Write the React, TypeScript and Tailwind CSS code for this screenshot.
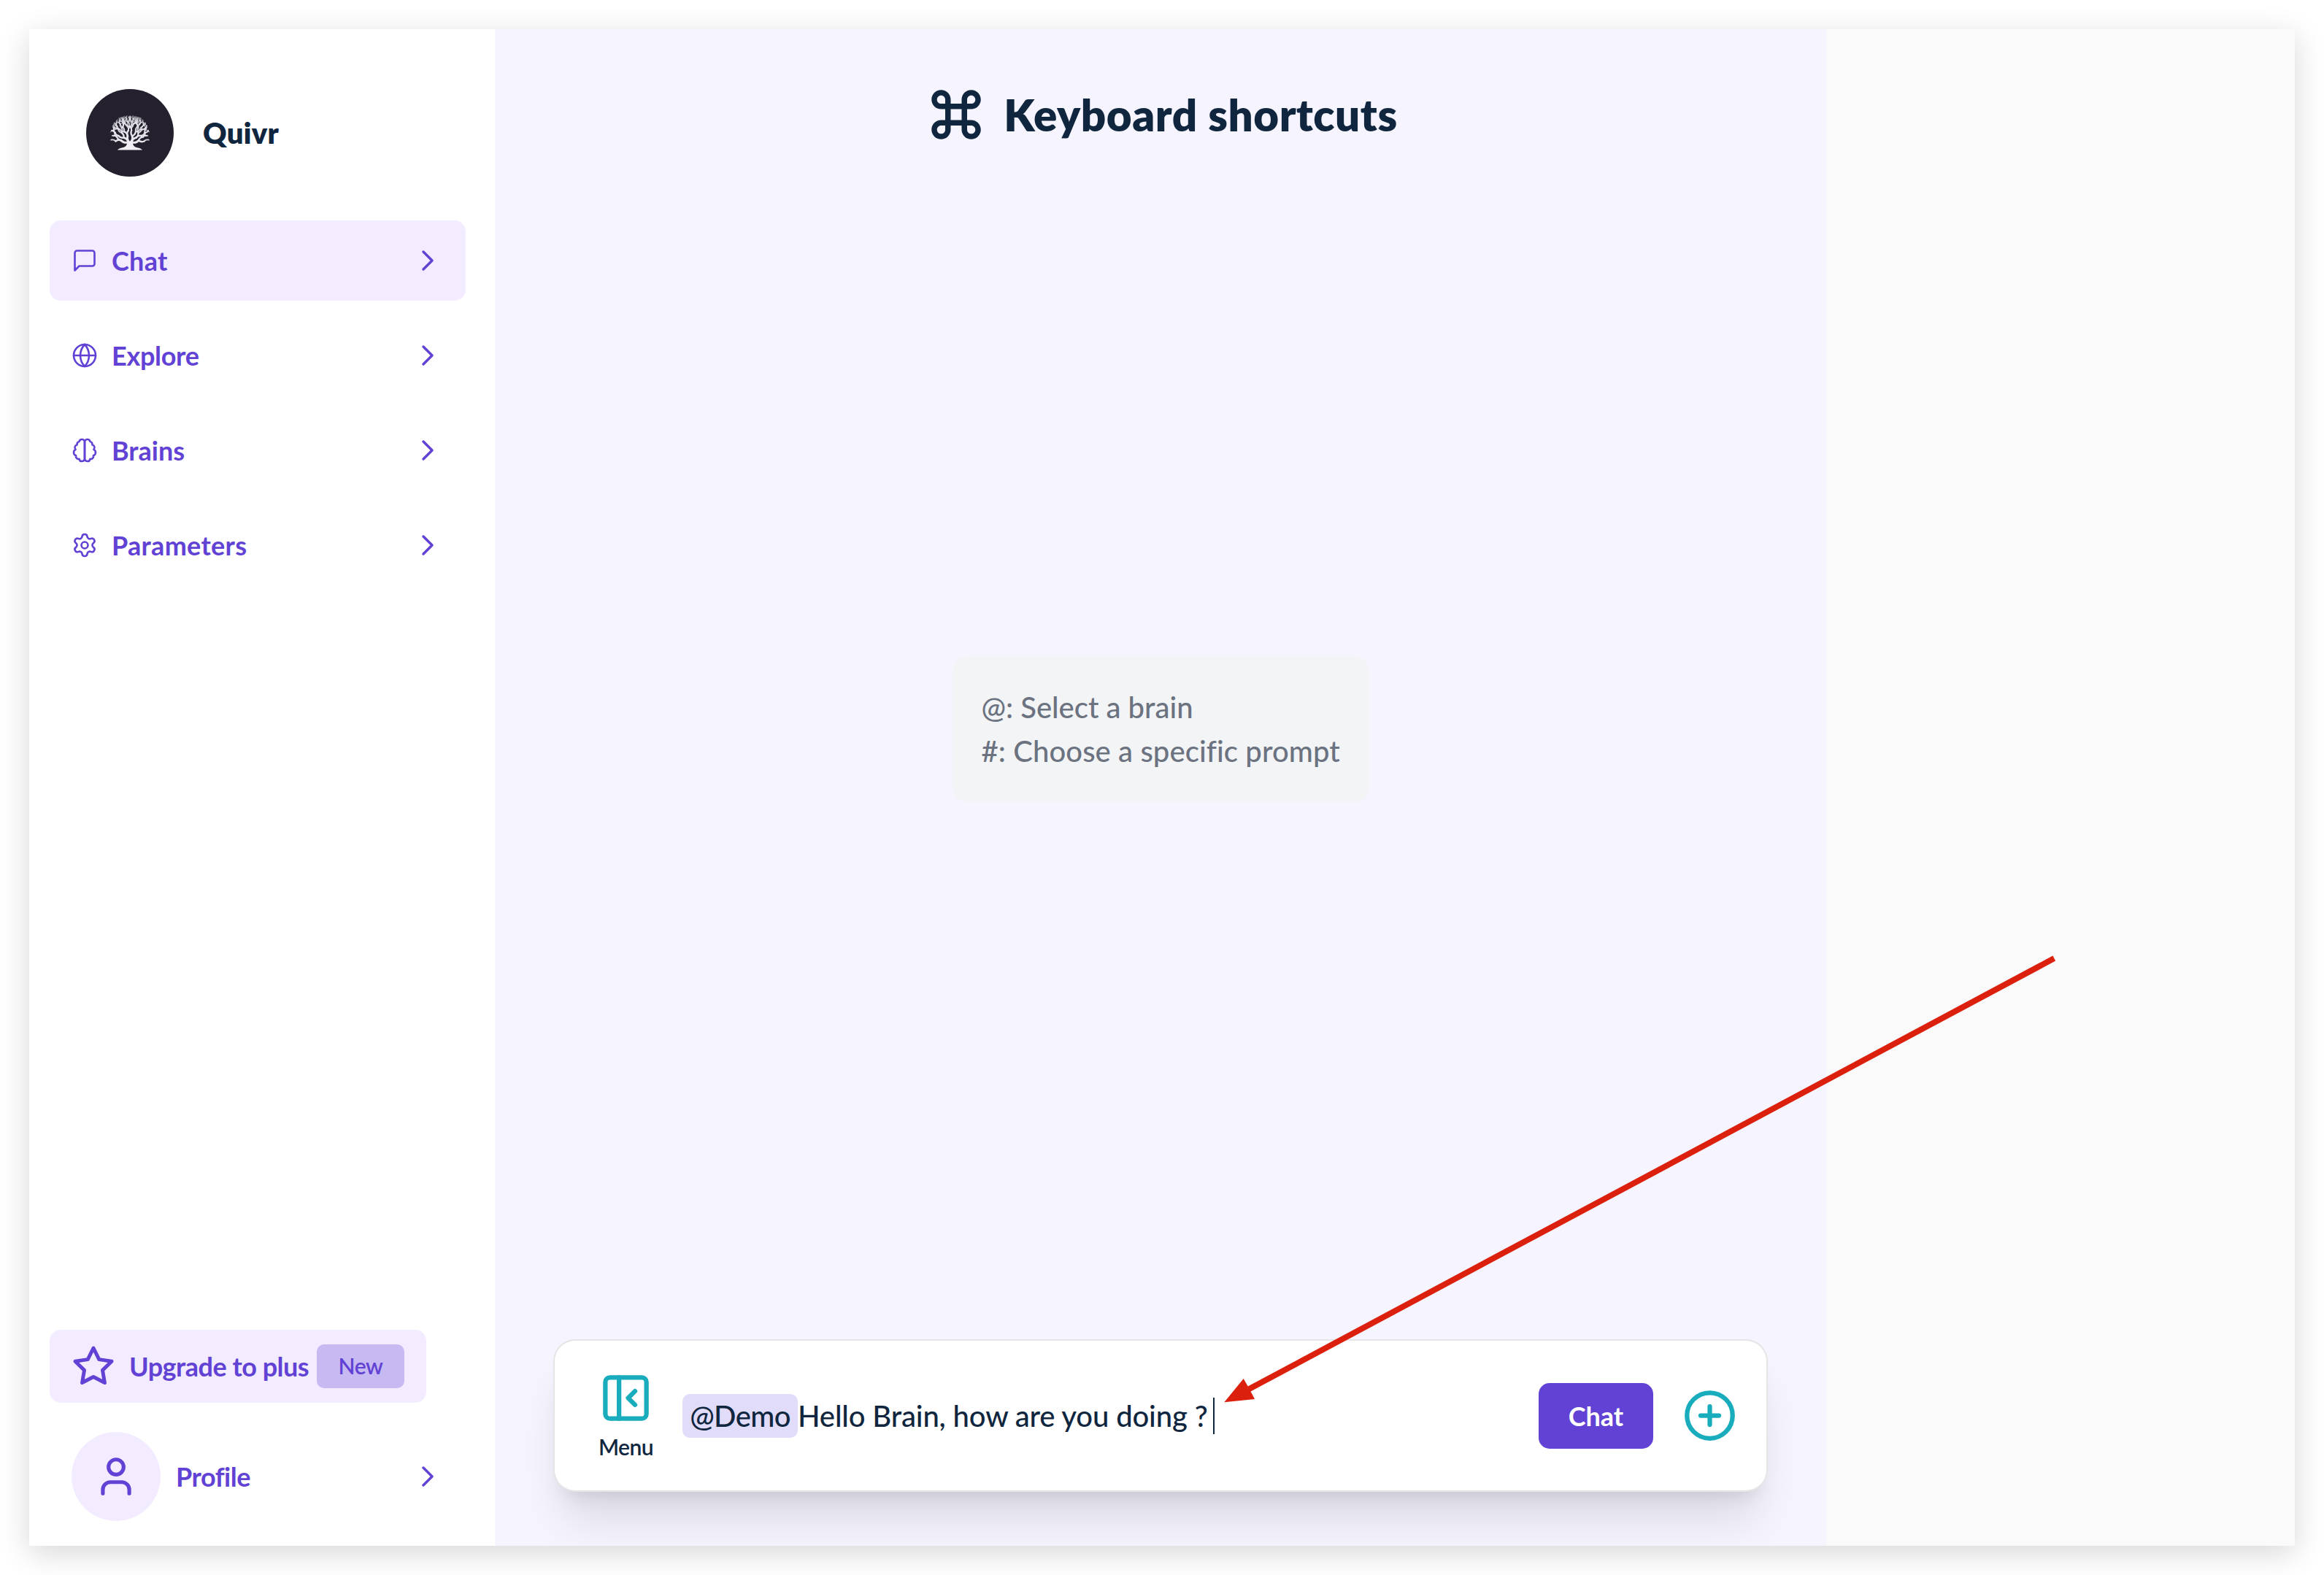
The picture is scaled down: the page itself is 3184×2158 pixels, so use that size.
import React from 'react';
import { ChevronRight, CirclePlus, Globe, PanelLeftClose, Settings, User } from 'lucide-react';
import { MdKeyboardCommandKey } from 'react-icons/md';

type Twig = { d: string; w: number; o: number };

/** Grows the branches of the logo tree inside its round canopy. */
function grow(x: number, y: number, angle: number, len: number, width: number, depth: number, side: number, out: Twig[]) {
  const rad = (angle * Math.PI) / 180;
  const ex = x + Math.sin(rad) * len;
  const ey = y - Math.cos(rad) * len;
  if (Math.hypot(ex - 60, ey - 62) > 27 || ey > 79) return;
  const bend = side * len * 0.3;
  const cx = (x + ex) / 2 + Math.cos(rad) * bend;
  const cy = (y + ey) / 2 + Math.sin(rad) * bend;
  out.push({
    d: `M${x.toFixed(1)} ${y.toFixed(1)}Q${cx.toFixed(1)} ${cy.toFixed(1)} ${ex.toFixed(1)} ${ey.toFixed(1)}`,
    w: width,
    o: Math.min(1, 0.7 + depth * 0.07),
  });
  if (depth === 0) return;
  grow(ex, ey, angle - 23, len * 0.85, width * 0.8, depth - 1, -side, out);
  grow(ex, ey, angle + 23, len * 0.85, width * 0.8, depth - 1, side, out);
}

const twigs: Twig[] = [];
[-74, -46, -16, 16, 46, 74].forEach((angle, i) =>
  grow(60 + (i - 2.5) * 1.3, 73, angle, 9, 2.9, 5, i % 2 ? 1 : -1, twigs),
);

function TreeLogo() {
  return (
    <div className="size-[120px] overflow-hidden rounded-full bg-[#24202d]">
      <svg viewBox="0 0 120 120" className="size-full" fill="none" stroke="#e9e7ee" strokeLinecap="round">
        {twigs.map((t, i) => (
          <path key={i} d={t.d} strokeWidth={t.w} opacity={t.o} />
        ))}
        <path
          d="M55.500 70c1.500 4 0 8-3 9.500-3 1-7 1-9.500 4h34c-2.500-3-6.500-3-9.500-4-3-1.500-4.500-5.500-3-9.500l-3 2-3 0z"
          fill="#f1eff5"
          stroke="none"
        />
      </svg>
    </div>
  );
}

type GlyphProps = { className?: string; strokeWidth?: number; children: React.ReactNode };

function Glyph({ className, strokeWidth = 1.75, children }: GlyphProps) {
  return (
    <svg
      viewBox="0 0 24 24"
      className={className}
      fill="none"
      stroke="currentColor"
      strokeWidth={strokeWidth}
      strokeLinecap="round"
      strokeLinejoin="round"
    >
      {children}
    </svg>
  );
}

const navItems = [
  {
    label: 'Chat',
    active: true,
    tracking: 'tracking-[0.3px]',
    icon: (
      <Glyph className="size-9">
        <path d="M21 15a2 2 0 0 1-2 2H7l-4 4V5a2 2 0 0 1 2-2h14a2 2 0 0 1 2 2z" />
      </Glyph>
    ),
  },
  {
    label: 'Explore',
    active: false,
    tracking: 'tracking-[-0.3px]',
    icon: <Globe className="size-9" strokeWidth={1.75} />,
  },
  {
    label: 'Brains',
    active: false,
    tracking: 'tracking-normal',
    icon: (
      <Glyph className="size-9">
        <path d="M9.500 2A2.500 2.500 0 0 1 12 4.500v15a2.500 2.500 0 0 1-4.960.44 2.500 2.500 0 0 1-2.960-3.080 3 3 0 0 1-.34-5.580 2.500 2.500 0 0 1 1.320-4.240 2.500 2.500 0 0 1 1.980-3A2.500 2.500 0 0 1 9.500 2Z" />
        <path d="M14.500 2A2.500 2.500 0 0 0 12 4.500v15a2.500 2.500 0 0 0 4.960.44 2.500 2.500 0 0 0 2.960-3.080 3 3 0 0 0 .34-5.580 2.500 2.500 0 0 0-1.320-4.240 2.500 2.500 0 0 0-1.980-3A2.500 2.500 0 0 0 14.500 2Z" />
      </Glyph>
    ),
  },
  {
    label: 'Parameters',
    active: false,
    tracking: 'tracking-[0.3px]',
    icon: <Settings className="size-9" strokeWidth={1.75} />,
  },
];

function Sidebar() {
  return (
    <aside className="flex w-[638px] shrink-0 flex-col bg-white px-7 text-[36px] font-bold text-[#6142d4]">
      <div className="flex items-center gap-10 pt-[82px] pl-[50px]">
        <TreeLogo />
        <span className="text-[40px] leading-[60px] font-extrabold tracking-[0.3px] text-[#10263e]">Quivr</span>
      </div>
      <nav className="mt-[60px] mr-3 flex flex-col gap-5">
        {navItems.map(({ label, icon, active, tracking }) => (
          <a
            key={label}
            className={`flex h-[110px] items-center gap-[18px] rounded-[15px] pr-[28px] pl-[30px] ${active ? 'bg-[#f3ebff]' : ''}`}
          >
            {icon}
            <span className={`flex-1 pl-px ${tracking}`}>{label}</span>
            <ChevronRight className="size-12" strokeWidth={1.75} />
          </a>
        ))}
      </nav>
      <div className="mt-auto flex h-[100px] w-[516px] items-center rounded-[15px] bg-[#f3ebff] pl-[30px]">
        <Glyph className="size-[60px] shrink-0" strokeWidth={2}>
          <polygon points="12 2 15.090 8.260 22 9.270 17 14.140 18.180 21.020 12 17.770 5.820 21.020 7 14.140 2 9.270 8.910 8.260 12 2" />
        </Glyph>
        <span className="w-[276px] shrink-0 pl-[19px] tracking-[-0.5px] whitespace-nowrap">Upgrade to plus</span>
        <span className="flex h-[60px] w-[120px] items-center justify-center rounded-[10px] bg-[#c7b9f2] pb-px text-[30px] font-semibold tracking-[-0.4px]">
          New
        </span>
      </div>
      <div className="mt-10 mr-3 mb-[34px] flex items-center gap-5 pr-[28px] pl-[30px]">
        <span className="flex size-[122px] items-center justify-center rounded-full bg-[#f3ebff]">
          <User className="size-[62px]" />
        </span>
        <span className="flex-1 pl-px tracking-[-0.5px]">Profile</span>
        <ChevronRight className="size-12" strokeWidth={1.75} />
      </div>
    </aside>
  );
}

function ChatBar() {
  return (
    <div className="flex h-[209px] w-[1664px] shrink-0 items-center rounded-[30px] border-2 border-black/10 bg-white pr-10 pl-[60px] shadow-[0_50px_62.5px_-12.5px_rgba(0,0,0,0.11),0_20px_25px_-15px_rgba(0,0,0,0.1)]">
      <button className="flex w-[75px] flex-col items-center gap-[9px] text-[30px] leading-10 font-semibold text-[#10263e]">
        <PanelLeftClose className="size-[75px] text-[#18acbc]" />
        <span className="tracking-[-0.5px]">Menu</span>
      </button>
      <p className="ml-10 flex h-[60px] flex-1 items-center text-[40px] leading-[60px] text-[#10263e]">
        <span className="w-[158px] rounded-[10px] bg-[#e0dcfa] text-center font-medium tracking-[-0.6px]">@Demo</span>
        <span className="font-medium tracking-[-0.14px] whitespace-nowrap">Hello Brain, how are you doing ?</span>
        <span className="ml-[7px] h-[50px] w-0.5 bg-[#10263e]" />
      </p>
      <button className="mr-10 flex h-[90px] w-[157px] items-center justify-center rounded-[15px] bg-[#6142d4] text-[36px] font-bold text-white">
        Chat
      </button>
      <CirclePlus className="size-[75px] text-[#18acbc]" />
    </div>
  );
}

function PointerArrow() {
  return (
    <svg
      className="pointer-events-none absolute top-[1269px] left-[1636px] h-[620px] w-[1144px]"
      viewBox="1676 1309 1144 620"
      fill="#dc200e"
    >
      <path d="M2812.400 1309.600L2816.200 1316.600L1713.500 1906.500L1719 1917L1677.300 1921.300L1703.700 1889L1709.700 1899.500Z" />
    </svg>
  );
}

export default function App() {
  return (
    <div className="flex h-[2158px] w-[3184px] bg-white p-10 font-['Lato',sans-serif]">
      <div className="relative flex h-[2078px] w-[3104px] bg-[#fafafa] shadow-[0_10px_40px_rgba(0,0,0,0.16)]">
        <Sidebar />
        <main className="flex w-[1824px] flex-col items-center overflow-hidden bg-[#f6f4ff]">
          <h1 className="mt-[72px] flex h-[90px] items-center gap-[20px] text-[60px] leading-[90px] font-extrabold tracking-[0.55px] text-[#10263e]">
            <MdKeyboardCommandKey className="size-[90px]" />
            <span>Keyboard shortcuts</span>
          </h1>
          <div className="mt-[697px] mb-auto w-[571px] rounded-[20px] bg-[#f3f4f6] p-10 text-[40px] leading-[60px] font-medium whitespace-nowrap text-[#6b7280]">
            <p>@: Select a brain</p>
            <p className="tracking-[0.1px]">#: Choose a specific prompt</p>
          </div>
          <ChatBar />
          <div className="h-[74px] shrink-0" />
        </main>
        <PointerArrow />
      </div>
    </div>
  );
}
